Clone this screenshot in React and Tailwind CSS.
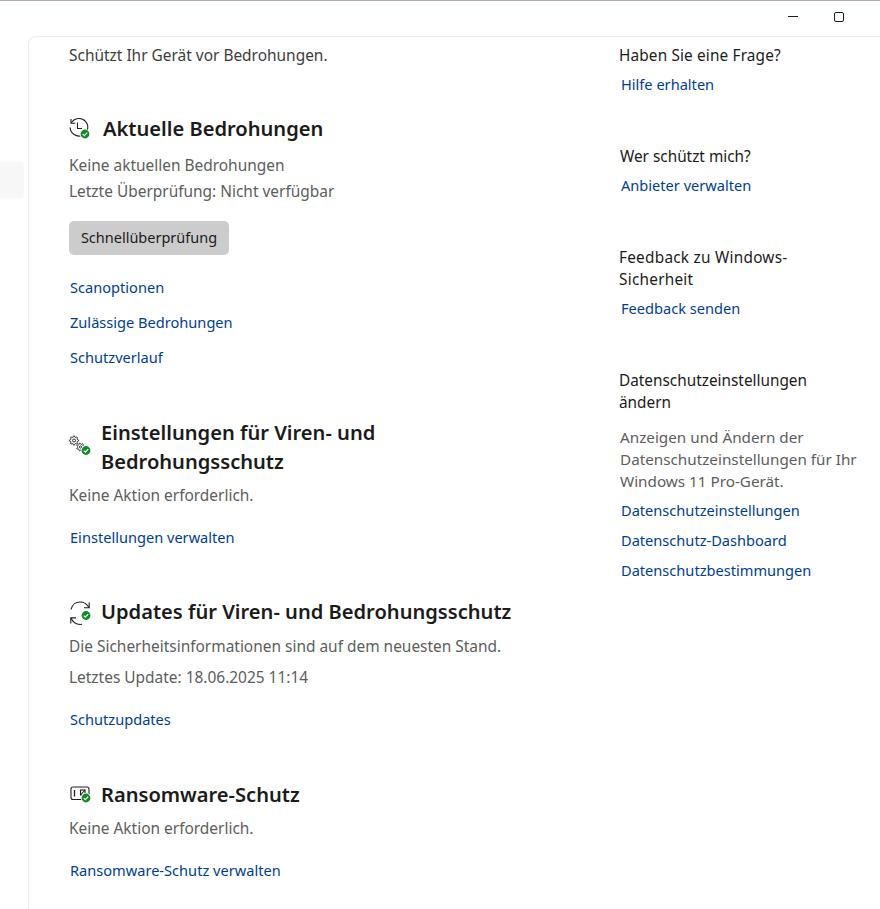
const FONT = '[font-family:"Noto_Sans","Open_Sans",sans-serif]'

function Badge({ x, y }) {
  return (
    <g transform={`translate(${x} ${y})`}>
      <circle r="5.2" fill="#fff" stroke="none" />
      <circle r="4.4" fill="#0f8a25" stroke="none" />
      <path d="M-2.2 0.1l1.5 1.5 2.9-3" fill="none" stroke="#fff" strokeWidth="1.2" />
    </g>
  )
}

// outline of a cog: alternating outer and inner points round the centre
function gearPoints(cx, cy, outer, inner, teeth) {
  const pts = []
  for (let i = 0; i < teeth * 4; i++) {
    const r = i % 4 < 2 ? outer : inner
    const a = ((i - 0.5) / (teeth * 4)) * Math.PI * 2
    pts.push(`${(cx + r * Math.cos(a)).toFixed(2)},${(cy + r * Math.sin(a)).toFixed(2)}`)
  }
  return pts.join(' ')
}

function HistoryIcon() {
  return (
    <svg width="22" height="22" viewBox="0 0 22 22" fill="none" stroke="#1f1f1f" strokeWidth="1.1" className="overflow-visible">
      <path d="M2 1v4.2h4.2" />
      <path d="M2.4 4.8A8.8 8.8 0 1 1 1.2 9.5" />
      <path d="M8.5 4.5v6h4.5" />
      <Badge x={16} y={16} />
    </svg>
  )
}

function GearsIcon() {
  return (
    <svg width="22" height="22" viewBox="0 0 22 22" fill="none" stroke="#1f1f1f" strokeWidth="0.9" className="overflow-visible">
      <polygon points={gearPoints(5, 4.5, 4.6, 3.4, 8)} />
      <circle cx="5" cy="4.5" r="1.5" />
      <polygon points={gearPoints(11.5, 11, 3.9, 2.8, 7)} />
      <circle cx="11.5" cy="11" r="1.1" />
      <Badge x={17} y={14.5} />
    </svg>
  )
}

function SyncIcon() {
  return (
    <svg width="22" height="22" viewBox="0 0 22 22" fill="none" stroke="#1f1f1f" strokeWidth="1.1" className="overflow-visible">
      <path d="M2 8.5C3 3.5 7 1 11 1c4 0 7 2 9 5.5" />
      <path d="M20.2 1.5v5.2H15" />
      <path d="M13 23.3c-4.5.6-9-1.5-11-6.3" />
      <path d="M1.8 22.5v-5.6H7" />
      <Badge x={17} y={14.5} />
    </svg>
  )
}

function RansomIcon() {
  return (
    <svg width="22" height="22" viewBox="0 0 22 22" fill="none" stroke="#1f1f1f" strokeWidth="1.1" className="overflow-visible">
      <rect x="2" y="3" width="18" height="12.5" rx="2" />
      <path d="M5.5 6v6.5" strokeWidth="1.3" />
      <rect x="11.5" y="6" width="4.5" height="5" />
      <path d="M11.5 11l4.5-5" />
      <Badge x={17} y={14} />
    </svg>
  )
}

function Link({ children, className = '' }) {
  return <a className={`block text-[14.6px] leading-[22px] text-[#003e92] ${className}`}>{children}</a>
}

function Muted({ children, className = '' }) {
  return <p className={`text-[15.45px] leading-[26px] text-[#5d5d5d] ${className}`}>{children}</p>
}

function SectionTitle({ icon, children, className = '', iconWidth = 'w-[32px]' }) {
  return (
    <div className={`flex items-center ${className}`}>
      <div className={`${iconWidth} shrink-0`}>{icon}</div>
      <h2 className="text-[20.1px] leading-[29px] font-semibold text-[#1b1b1b]">{children}</h2>
    </div>
  )
}

function SideTitle({ children, className = '' }) {
  return <h3 className={`text-[15.35px] leading-[22px] text-[#1b1b1b] ${className}`}>{children}</h3>
}

export default function App() {
  return (
    <div className={`h-[909px] w-[880px] overflow-hidden bg-white ${FONT}`}>
      <div className="h-px bg-[#b9a9ad]" />
      {/* window controls */}
      <div className="flex h-[35px] items-start justify-end pt-[11px]">
        <div className="mr-[36px] mt-[4px] h-px w-[10px] bg-[#1b1b1b]" />
        <div className="mr-[36px] h-[10px] w-[10px] rounded-[2px] border border-[#1b1b1b]" />
      </div>
      <div className="flex h-[873px]">
        <div className="w-[28px] shrink-0 pt-[126px]">
          <div className="h-[36px] w-[24px] rounded-r-[4px] bg-[#f7f7f7]" />
        </div>
        <div className="flex flex-1 rounded-tl-[8px] border-l border-t border-[#ececec]">
          <main className="w-[550px] shrink-0 pl-[40px] pt-[5px]">
            <p className="text-[15.45px] leading-[26px] text-[#3d3d3d]">Schützt Ihr Gerät vor Bedrohungen.</p>

            <SectionTitle icon={<HistoryIcon />} iconWidth="w-[34px]" className="mt-[46px]">Aktuelle Bedrohungen</SectionTitle>
            <Muted className="mt-[9px]">Keine aktuellen Bedrohungen</Muted>
            <Muted>Letzte Überprüfung: Nicht verfügbar</Muted>
            <button className="mt-[17px] block h-[34px] w-[160px] rounded-[5px] bg-[#cccccc] text-[14.5px] text-[#1b1b1b]">Schnellüberprüfung</button>
            <Link className="ml-px mt-[21px]">Scanoptionen</Link>
            <Link className="ml-px mt-[13px]">Zulässige Bedrohungen</Link>
            <Link className="ml-px mt-[13px]">Schutzverlauf</Link>

            <SectionTitle icon={<GearsIcon />} className="mt-[50px]">
              <>Einstellungen für Viren- und<br />Bedrohungsschutz</>
            </SectionTitle>
            <Muted className="mt-[6px]">Keine Aktion erforderlich.</Muted>
            <Link className="ml-px mt-[18px]">Einstellungen verwalten</Link>

            <SectionTitle icon={<SyncIcon />} className="mt-[49px]">Updates für Viren- und Bedrohungsschutz</SectionTitle>
            <Muted className="mt-[7px]">Die Sicherheitsinformationen sind auf dem neuesten Stand.</Muted>
            <Muted className="mt-[5px]">Letztes Update: 18.06.2025 11:14</Muted>
            <Link className="ml-px mt-[18px]">Schutzupdates</Link>

            <SectionTitle icon={<RansomIcon />} className="mt-[50px]">Ransomware-Schutz</SectionTitle>
            <Muted className="mt-[6px]">Keine Aktion erforderlich.</Muted>
            <Link className="ml-px mt-[18px]">Ransomware-Schutz verwalten</Link>
          </main>

          <aside className="flex-1 pl-[40px] pt-[7px]">
            <SideTitle className="tracking-[0.15px]">Haben Sie eine Frage?</SideTitle>
            <Link className="ml-[2px] mt-[7px]">Hilfe erhalten</Link>

            <SideTitle className="ml-px mt-[50px]">Wer schützt mich?</SideTitle>
            <Link className="ml-[2px] mt-[7px]">Anbieter verwalten</Link>

            <SideTitle className="mt-[50px] tracking-[0.25px]">Feedback zu Windows-<br />Sicherheit</SideTitle>
            <Link className="ml-[2px] mt-[7px]">Feedback senden</Link>

            <SideTitle className="mt-[50px]">Datenschutzeinstellungen<br />ändern</SideTitle>
            <p className="ml-px mt-[13px] text-[15.25px] leading-[22px] text-[#5d5d5d]">Anzeigen und Ändern der<br />Datenschutzeinstellungen für Ihr<br />Windows 11 Pro-Gerät.</p>
            <Link className="ml-[2px] mt-[7px]">Datenschutzeinstellungen</Link>
            <Link className="ml-[2px] mt-[8px]">Datenschutz-Dashboard</Link>
            <Link className="ml-[2px] mt-[8px]">Datenschutzbestimmungen</Link>
          </aside>
        </div>
      </div>
    </div>
  )
}
